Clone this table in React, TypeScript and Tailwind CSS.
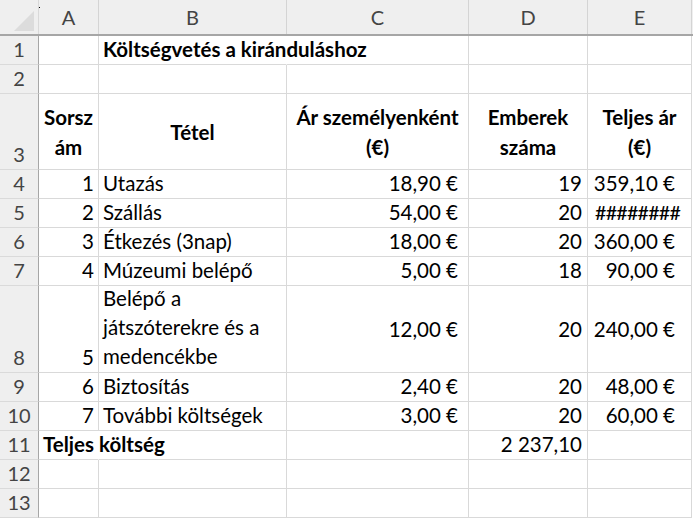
import React from "react";

type Cell = {
  text?: string;
  lines?: string[];
  bold?: boolean;
  align?: "left" | "right" | "center";
  span?: boolean;
  middle?: boolean;
  hashes?: boolean;
};

const colHeaders = ["A", "B", "C", "D", "E"];

const rowHeights = ["h-[29px]", "h-[29px]", "h-[76px]", "h-[29px]", "h-[29px]", "h-[29px]", "h-[29px]", "h-[87px]", "h-[29px]", "h-[29px]", "h-[29px]", "h-[29px]", "h-[29px]"];

const colWidths = ["w-[60px]", "w-[188px]", "w-[182px]", "w-[119px]", "w-[104px]"];
const rightPad = ["pr-[4px]", "pr-[4px]", "pr-[10px]", "pr-[5px]", "pr-[16px]"];

const rows: (Cell | null)[][] = [
  [null, { text: "Költségvetés a kiránduláshoz", bold: true, span: true }, null, null, null],
  [null, null, null, null, null],
  [
    { lines: ["Sorsz", "ám"], bold: true, align: "center" },
    { lines: ["Tétel"], bold: true, align: "center" },
    { lines: ["Ár személyenként", "(€)"], bold: true, align: "center" },
    { lines: ["Emberek", "száma"], bold: true, align: "center" },
    { lines: ["Teljes ár", "(€)"], bold: true, align: "center" },
  ],
  [{ text: "1", align: "right" }, { text: "Utazás" }, { text: "18,90 €", align: "right" }, { text: "19", align: "right" }, { text: "359,10 €", align: "right" }],
  [{ text: "2", align: "right" }, { text: "Szállás" }, { text: "54,00 €", align: "right" }, { text: "20", align: "right" }, { text: "########", align: "right", hashes: true }],
  [{ text: "3", align: "right" }, { text: "Étkezés (3nap)" }, { text: "18,00 €", align: "right" }, { text: "20", align: "right" }, { text: "360,00 €", align: "right" }],
  [{ text: "4", align: "right" }, { text: "Múzeumi belépő" }, { text: "5,00 €", align: "right" }, { text: "18", align: "right" }, { text: "90,00 €", align: "right" }],
  [
    { text: "5", align: "right" },
    { lines: ["Belépő a", "játszóterekre és a", "medencékbe"] },
    { text: "12,00 €", align: "right", middle: true },
    { text: "20", align: "right", middle: true },
    { text: "240,00 €", align: "right", middle: true },
  ],
  [{ text: "6", align: "right" }, { text: "Biztosítás" }, { text: "2,40 €", align: "right" }, { text: "20", align: "right" }, { text: "48,00 €", align: "right" }],
  [{ text: "7", align: "right" }, { text: "További költségek" }, { text: "3,00 €", align: "right" }, { text: "20", align: "right" }, { text: "60,00 €", align: "right" }],
  [{ text: "Teljes költség", bold: true, span: true }, null, null, { text: "2 237,10", align: "right" }, null],
  [null, null, null, null, null],
  [null, null, null, null, null],
];

function DataCell({ cell, col, height }: { cell: Cell | null; col: number; height: string }) {
  const rightBorder = cell?.span ? "border-r-white" : "border-r-[#d9d9d9]";
  const base = `${colWidths[col]} ${height} shrink-0 border-r border-b ${rightBorder} border-b-[#d9d9d9] flex text-[20.5px] text-black relative`;
  if (!cell) return <div className={base} />;

  if (cell.lines && cell.align === "center") {
    return (
      <div className={`${base} flex-col items-center justify-center font-bold leading-[30px] text-center`}>
        {cell.lines.map((l) => (
          <span key={l} className="whitespace-nowrap">{l}</span>
        ))}
      </div>
    );
  }

  if (cell.lines) {
    return (
      <div className={`${base} flex-col justify-end pl-[4px] pb-[1px] leading-[29px]`}>
        {cell.lines.map((l) => (
          <span key={l} className="whitespace-nowrap">{l}</span>
        ))}
      </div>
    );
  }

  if (cell.hashes) {
    return (
      <div className={`${base} items-end justify-end pr-[11px] pb-[1px] leading-[27px]`}>
        <span className="whitespace-nowrap text-[19.5px] font-medium tracking-[-0.7px]">{cell.text}</span>
      </div>
    );
  }

  const justify = cell.align === "right" ? `justify-end ${rightPad[col]}` : "justify-start pl-[4px]";
  const vert = cell.middle ? "items-center" : "items-end pb-[1px]";
  return (
    <div className={`${base} ${vert} ${justify} leading-[27px] ${cell.bold ? "font-bold" : ""}`}>
      {cell.span ? (
        <span className="absolute left-[4px] bottom-[1px] whitespace-nowrap z-10">{cell.text}</span>
      ) : (
        <span className="whitespace-nowrap">{cell.text}</span>
      )}
    </div>
  );
}

export default function App() {
  return (
    <div className="w-[693px] h-[520px] bg-white overflow-hidden" style={{ fontFamily: "Lato, 'Liberation Sans', sans-serif" }}>
      {/* column headers */}
      <div className="flex h-[36px] bg-[#efefef] border-b-2 border-[#a6a6a6]">
        <div className="w-[39px] shrink-0 relative border-r border-[#d9d9d9]">
          <div className="absolute right-[4px] bottom-[3px] w-0 h-0 border-l-[20px] border-l-transparent border-b-[20px] border-b-[#dcdcdc]" />
          <div className="absolute left-[39px] top-[7px] w-px h-px bg-black" />
        </div>
        {colHeaders.map((h, i) => (
          <div
            key={h}
            className={`${colWidths[i]} shrink-0 flex items-end justify-center pb-[2px] text-[20px] text-[#444] border-r border-[#d4d4d4]`}
          >
            {h}
          </div>
        ))}
      </div>
      {/* rows */}
      {rows.map((row, r) => (
        <div key={r} className="flex">
          <div
            className={`w-[39px] ${rowHeights[r]} shrink-0 bg-[#efefef] border-r border-r-[#a6a6a6] border-b border-b-[#dadada] flex items-end justify-center pb-[1px] leading-[27px] text-[20px] text-[#444]`}
          >
            {r + 1}
          </div>
          {row.map((cell, c) => (
            <DataCell key={c} cell={cell} col={c} height={rowHeights[r]} />
          ))}
        </div>
      ))}
    </div>
  );
}
